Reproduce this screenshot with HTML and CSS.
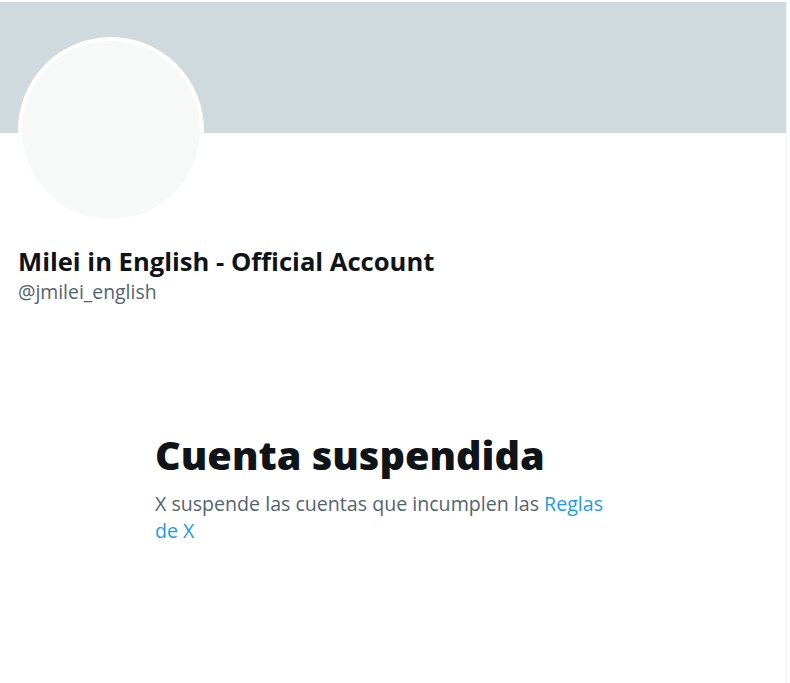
FILE: index.html
```html
<!DOCTYPE html>
<html lang="es">
<head>
    <meta charset="UTF-8">
    <meta name="viewport" content="width=device-width, initial-scale=1.0">
    <title>Cuenta suspendida</title>
    <link rel="stylesheet" href="styles.css">
</head>
<body>
    <div class="column">
        <div class="banner"></div>

        <div class="profile">
            <div class="avatar-row">
                <div class="avatar"></div>
            </div>
            <div class="names">
                <div class="display-name">Milei in English - Official Account</div>
                <div class="handle">@jmilei_english</div>
            </div>
        </div>

        <div class="empty-state">
            <h1>Cuenta suspendida</h1>
            <p>X suspende las cuentas que incumplen las <a href="#">Reglas de X</a></p>
        </div>
    </div>
</body>
</html>
```

FILE: styles.css
```css
body {
    margin: 0;
    padding: 0;
    background-color: white;
    font-family: "Open Sans", "Noto Sans", sans-serif;
    color: #0f1419;
}

.column {
    width: 787px;
    min-height: 683px;
    border-right: 1px solid #eff3f4;
    padding-top: 2px;
    box-sizing: border-box;
}

.banner {
    height: 131px;
    background-color: #cfd9de;
}

.profile {
    padding: 0 18px;
}

.avatar-row {
    display: flow-root;
    height: 88px;
}

.avatar {
    width: 178px;
    height: 178px;
    margin-top: -96px;
    border-radius: 50%;
    background-color: #f7f9f9;
    border: 4px solid white;
}

.names {
    margin-top: 25px;
}

.display-name {
    font-size: 25.6px;
    font-weight: 700;
    line-height: 32px;
}

.handle {
    font-size: 19.4px;
    line-height: 28px;
    color: #536471;
}

.empty-state {
    width: 470px;
    margin: 126px 0 0 155px;
}

.empty-state h1 {
    margin: 0;
    font-size: 39.7px;
    font-weight: 800;
    line-height: 46px;
}

.empty-state p {
    margin: 12px 0 0;
    font-size: 19.6px;
    line-height: 27px;
    color: #536471;
}

.empty-state a {
    color: #1d9bf0;
    text-decoration: none;
}
```
